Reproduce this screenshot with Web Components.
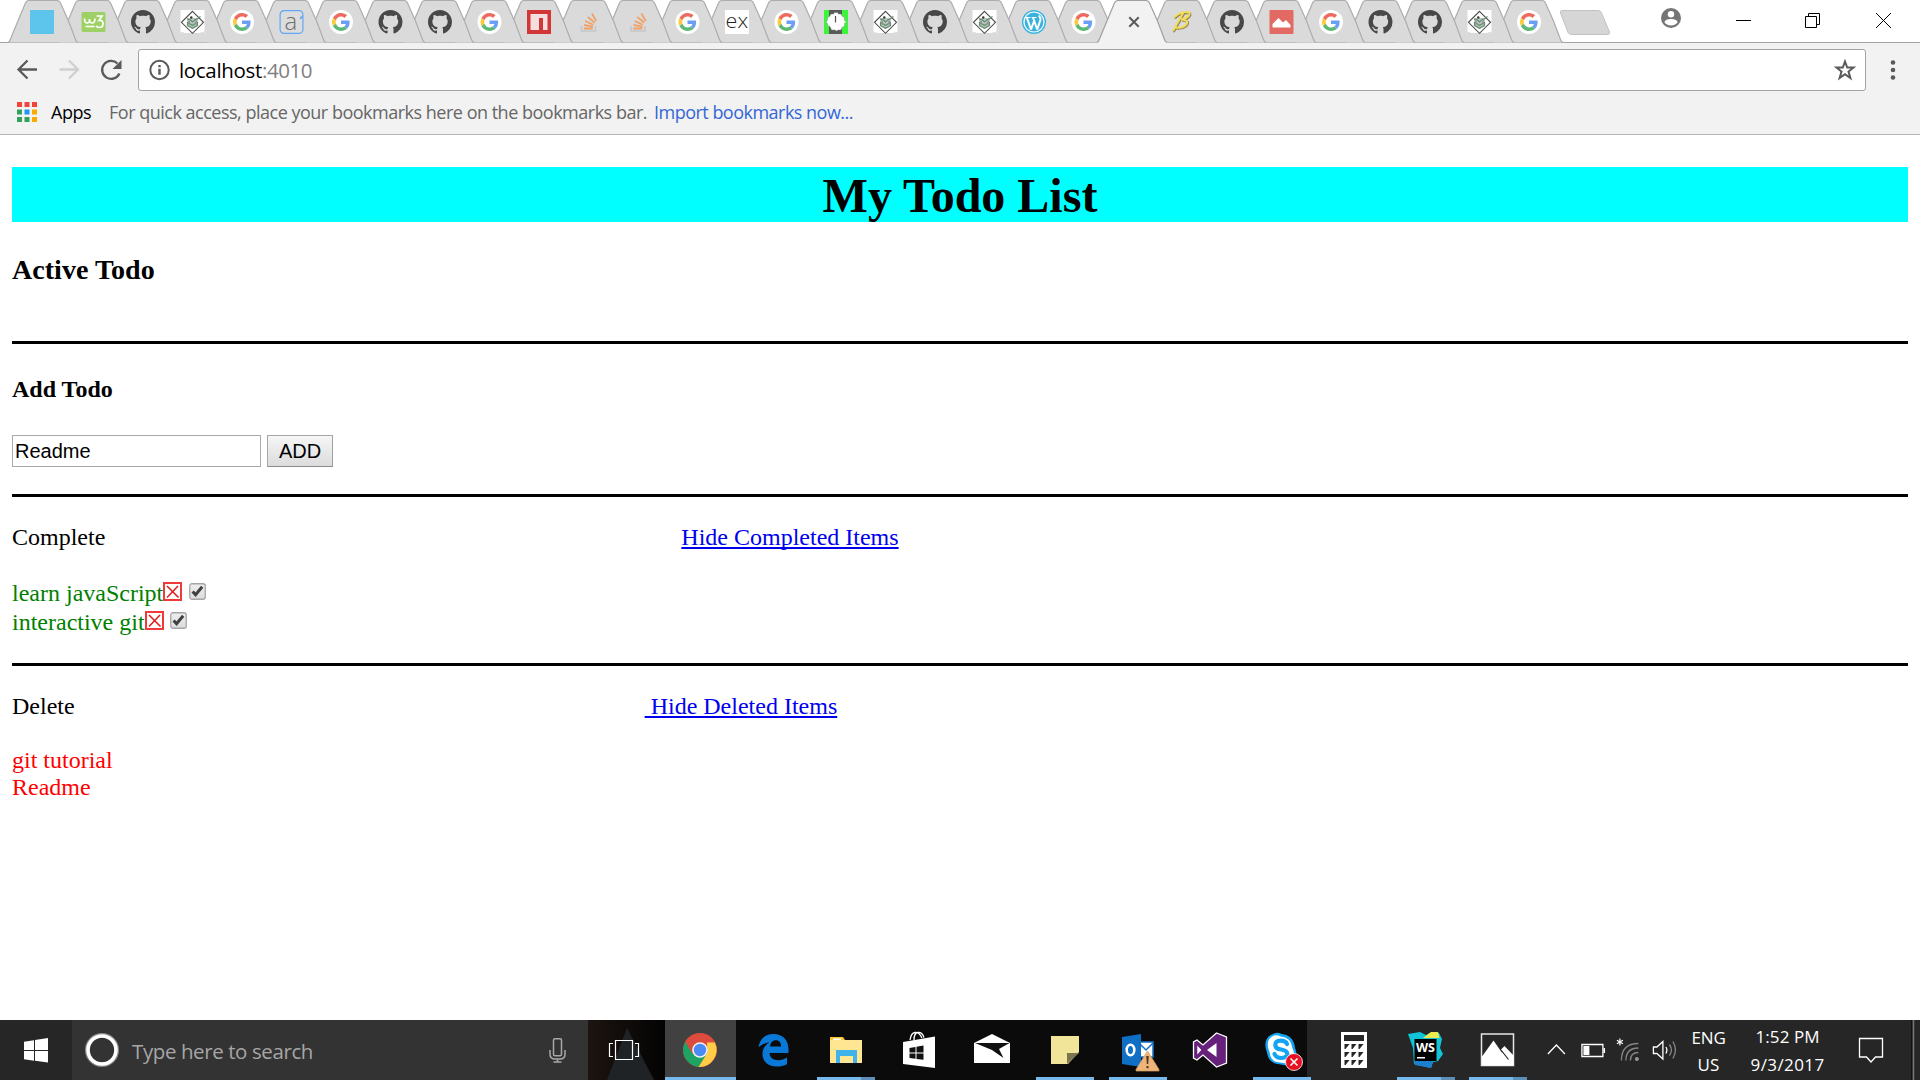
<!DOCTYPE html>
<html lang="en">
<head>
<meta charset="utf-8">
<title>localhost:4010</title>
<style>
html,body{margin:0;height:100%;overflow:hidden;background:#fff}
body{display:flex;flex-direction:column;height:1080px;width:1920px}
</style>
</head>
<body>
<browser-tabs></browser-tabs>
<browser-toolbar></browser-toolbar>
<bookmarks-bar></bookmarks-bar>
<todo-page></todo-page>
<task-bar></task-bar>

<script>
const define = (name, html, setup) => customElements.define(name, class extends HTMLElement {
  connectedCallback() {
    if (this.shadowRoot) return;
    const t = document.createElement('template');
    t.innerHTML = html;
    this.attachShadow({ mode: 'open' }).append(t.content.cloneNode(true));
    if (setup) setup(this, this.shadowRoot);
  }
});

/* One line of interface text set to a fixed advance width. */
define('ui-text', `<style>:host{display:block;white-space:pre;font-family:"Open Sans","Noto Sans",sans-serif}span{display:inline-block}</style><span><slot></slot></span>`, (el, root) => {
  const span = root.querySelector('span');
  const w = +el.getAttribute('width');
  const n = el.textContent.length;
  const d = (w - span.getBoundingClientRect().width) / n;
  el.style.letterSpacing = d.toFixed(3) + 'px';
  el.style.width = w + 'px';
});

const G = `<g transform="translate(3 3) scale(.375)"><path fill="#ee6a5f" d="M24 9.5c3.54 0 6.71 1.22 9.21 3.6l6.85-6.85C35.9 2.38 30.47 0 24 0 14.62 0 6.51 5.38 2.56 13.22l7.98 6.19C12.43 13.72 17.74 9.5 24 9.5z"/><path fill="#6a9ff5" d="M46.98 24.55c0-1.57-.15-3.09-.38-4.55H24v9.02h12.94c-.58 2.96-2.26 5.48-4.78 7.18l7.73 6c4.51-4.18 7.09-10.36 7.09-17.65z"/><path fill="#fcca3c" d="M10.53 28.59c-.48-1.45-.76-2.99-.76-4.59s.27-3.14.76-4.59l-7.98-6.19C.92 16.46 0 20.12 0 24c0 3.88.92 7.54 2.56 10.78l7.97-6.19z"/><path fill="#5cb874" d="M24 48c6.48 0 11.93-2.13 15.89-5.81l-7.73-6c-2.15 1.45-4.92 2.3-8.16 2.3-6.26 0-11.57-4.22-13.47-9.91l-7.98 6.19C6.51 42.62 14.62 48 24 48z"/></g>`;
const FAV = {
  blank: `<path fill="#5dc4ec" d="M0 0h24v24H0z"/>`,
  w3: `<rect y="2" width="24" height="20" rx="1.5" fill="#9fd066"/><path d="M3 8.500c0 4 1 4.500 3 4.500s2-2 2-4c0 3 .5 4 2.500 4s3-1.500 3-4.500M4 16.500h9" fill="none" stroke="#fff" stroke-width="1.600"/><path d="M15 6h5.500l-3 4.500c3-.5 4 1 4 3.200 0 2.500-1.500 3.800-3.800 3.800-1.500 0-2.500-.6-3-1.600" fill="none" stroke="#fff" stroke-width="1.700"/>`,
  gh: `<path transform="scale(1.5)" fill="#484848" d="M8 0C3.58 0 0 3.58 0 8c0 3.54 2.29 6.53 5.47 7.59.4.07.55-.17.55-.38 0-.19-.01-.82-.01-1.49-2.01.37-2.53-.49-2.69-.94-.09-.23-.48-.94-.82-1.13-.28-.15-.68-.52-.01-.53.63-.01 1.08.58 1.23.82.72 1.21 1.87.87 2.33.66.07-.52.28-.87.51-1.07-1.78-.2-3.64-.89-3.64-3.95 0-.87.31-1.59.82-2.15-.08-.2-.36-1.02.08-2.12 0 0 .67-.21 2.2.82.64-.18 1.32-.27 2-.27.68 0 1.36.09 2 .27 1.53-1.04 2.2-.82 2.2-.82.44 1.1.16 1.92.08 2.12.51.56.82 1.27.82 2.15 0 3.07-1.87 3.75-3.65 3.95.29.25.54.73.54 1.48 0 1.07-.01 1.93-.01 2.2 0 .21.15.46.55.38A8.013 8.013 0 0016 8c0-4.42-3.58-8-8-8z"/>`,
  leaf: `<path fill="#fff" d="M0 0h24v24H0z"/><path fill="#dadada" d="M0 21.500l4 1.500h15l5-1.500V24H0z"/><path fill="none" stroke="#4a4a4a" stroke-width="1.100" d="M12 1.300L23 12.300 12 23.300 1 12.300z"/><path fill="#bcc5be" d="M6.500 8h11v8L12 19l-5.500-3z"/><circle cx="10.800" cy="7.500" r="1.200" fill="#333"/><path fill="none" stroke="#5f8f6e" stroke-width="1.200" d="M6.500 9c2 0 4 1 5.500 3 1.500-2 3-3 5.500-3.500l2.500-2M7 12v3.500l5 2.800 5-2.800V12M9 13.500l3 2 3-2"/><path stroke="#666" stroke-width=".8" fill="none" d="M8.500 10.500v4M15.500 10.500v4"/>`,
  g: `<circle cx="12" cy="12" r="12" fill="#fff"/>` + G,
  a: `<rect x=".6" y=".6" width="22.800" height="22.800" rx="4" fill="#dcdcdc" stroke="#62a6f5" stroke-width="1.200"/><path d="M21 9q0-2 2.500-2.500" stroke="#62a6f5" fill="none" stroke-width="1.500"/><text x="5" y="19.500" font-family="Open Sans" font-weight="300" font-size="24" fill="#707070">a</text>`,
  npm: `<path fill="#d23636" d="M0 0h24v24H0z"/><path fill="#f4dede" d="M3.500 4h17v16H16V8h-4v12H3.500z"/>`,
  so: `<path fill="none" stroke="#c3c7cb" stroke-width="1.700" d="M5 16v5h14v-5"/><path stroke="#f0a269" stroke-width="1.800" d="M8 18.500h9M8.300 15l8.800 1.600M9.300 11l8.200 3.800M12 7l7 5.700M16 3.500l4.500 7.500" transform="translate(-.7 0)"/>`,
  ex: `<path fill="#fff" d="M0 0h24v24H0z"/><text x=".6" y="17.500" font-family="Open Sans" font-weight="300" font-size="20" textLength="22.500" lengthAdjust="spacingAndGlyphs" fill="#222">ex</text>`,
  clock: `<path fill="#3bf53b" d="M0 0h24v24H0z"/><path fill="#5a5a5a" d="M5 0h13v24H5z"/><path fill="#fff" stroke="#777" stroke-width=".4" d="M7 4h2.500l1-1.500h3l1 1.500H17l1.500 2.500 2 1v3l2 1.500-2 1.500v2.500l-2.500 1.500-1 2.500h-3l-1.500 1-1.500-1H7.500L6 16.500l-2.500-1v-2L2 12l1.500-2V7.500l2-1z"/><path stroke="#555" stroke-width="1.200" d="M11.500 6v6.500"/>`,
  wp: `<circle cx="12" cy="12" r="11.300" fill="#fff" stroke="#38b3df" stroke-width="1.400"/><circle cx="12" cy="12" r="9.400" fill="#38b3df"/><path fill="none" stroke="#fff" stroke-width="2" d="M4.800 7.500l4.200 12M11 7.500l4.200 12M9 19.500l3.200-9M15.200 19.500l3.200-9.500q.4-2-1.500-4.500"/><path stroke="#fff" stroke-width="1" d="M3.300 7.500h5M9.500 7.500h5"/>`,
  b: `<g fill="none" stroke-linecap="round" transform="rotate(4 12 12)"><path stroke="#8f8650" stroke-width="2.400" d="M12.800 3.800L4.200 21.800M4.800 8.300c3-4 9-6.300 13.500-5.500 2.500 1 0 6-7 7.500 5 0 7.500 1.500 5.500 4.500-2 3-6 4-10 4.200"/><path stroke="#f2dc5a" stroke-width="2" d="M12 3L3.500 21M4 7.500c3-4 9-6.300 13.500-5.500 2.500 1 0 6-7 7.500 5 0 7.500 1.500 5.500 4.500-2 3-6 4-10 4.200"/></g>`,
  hill: `<rect width="24" height="24" rx="1" fill="#e26a62"/><path fill="#fff" d="M3 17.500v-3.500L9 8l4.500 4.500L16.500 10l4.500 5v2.500z"/>`,
  close: `<path stroke="#5a5a5a" stroke-width="2" d="M8.300 7.300l9.400 9.400M17.700 7.300l-9.400 9.400"/>`
};
const TABS = 'blank w3 gh leaf g a g gh gh g npm so so g ex g clock leaf gh leaf wp g close b gh hill g gh gh leaf g'.split(' ');

define('browser-tab', `<style>
:host{display:block;flex:0 0 49.5px;height:43px;position:relative}
svg{display:block;overflow:visible}
.edge{stroke:#adadad;stroke-width:1.2;fill:#dadada}
:host([active]) .edge{fill:#f2f2f2;stroke:#a0a0a0}
</style><svg width="49.5" height="43"></svg>`, (el, root) => {
  const n = el.getAttribute('icon');
  const i = +el.getAttribute('index');
  const left = 8 + 49.5 * i;
  const dx = i ? Math.round(left + 23.5) - left : 22;
  root.querySelector('svg').innerHTML = `<path class="edge" d="M0 42.500Q1.500 42 2.300 39.500L9.500 22 17.500 3Q18.600 .5 21 .5H49Q51.400 .5 52.500 3L60.500 21 67.500 39.500Q68.300 42 70 42.500"/>` +
   (el.hasAttribute('active') ? `<path d="M1 43h68" stroke="#f2f2f2" stroke-width="1.800"/>` : '') +
   `<g transform="translate(${dx} 10)">${FAV[n]}</g>`;
});

define('browser-tabs', `<style>
:host{display:flex;height:43px;flex:none;background:linear-gradient(#fff 42px,#a3a3a3 42px);justify-content:space-between}
.strip{display:flex;padding-left:8px;isolation:isolate}
.new{margin:10px 0 0 17.500px}
svg{display:block}
</style><div class="strip"></div>
<svg width="280" height="42" viewBox="1640 0 280 42"><circle cx="1671" cy="18" r="10" fill="#757575"/><circle cx="1671" cy="14.300" r="3.200" fill="#fff"/><path d="M1664.500 22.500q0-3.500 6.500-3.500t6.500 3.500q-2.500 3-6.500 3t-6.500-3z" fill="#fff"/><g fill="none" stroke="#000" stroke-width="1"><path d="M1736 20.500h15M1876 13l15 15M1891 13l-15 15"/><path d="M1805.500 16.500h11v11h-11zM1808.500 16v-2.500h11v11h-2.500"/></g></svg>`, (el, root) => {
  const strip = root.querySelector('.strip');
  TABS.forEach((n, i) => {
    const t = document.createElement('browser-tab');
    t.setAttribute('icon', n);
    t.setAttribute('index', i);
    if (n === 'close') t.setAttribute('active', '');
    t.style.zIndex = n === 'close' ? 99 : 50 - i;
    strip.append(t);
  });
  strip.insertAdjacentHTML('beforeend', `<svg class="new" width="52" height="26" style="margin-left:${1560 - 8 - 49.5 * TABS.length}px"><path fill="#d6d6d6" stroke="#c2c2c2" d="M1.500 .5H38q2.500 0 3.300 2L49.500 22q.6 2-1.500 2.500H11.500Q9 24.500 8 22.500L.5 3Q0 .5 1.500 .5z"/></svg>`);
});

define('browser-toolbar', `<style>
:host{display:flex;flex:none;height:55px;background:#f2f2f2;align-items:flex-start}
.nav{display:block;width:138px;height:55px}
.box{display:flex;align-items:center;box-sizing:border-box;margin-top:6px;width:1728px;height:42px;border:1px solid #a3a3a3;border-radius:3px;background:#fff;padding:0 9px 0 10px}
ui-text{font-size:20.500px;line-height:40px;height:40px;margin-left:9px}
.port{margin-left:0;color:#808080}
.star{margin-left:auto}
svg{display:block}
</style>
<svg class="nav" viewBox="0 43 138 55"><g fill="none" stroke-width="2.300"><path stroke="#5a5a5a" d="M37 69.500H19M27.500 60.500l-9 9 9 9"/><path stroke="#d0d0d0" d="M59.500 69.500H78M69 60.500l9 9-9 9"/><path stroke="#5a5a5a" d="M117.500 63.500A9 9 0 1 0 119.400 73.500"/></g><path fill="#5a5a5a" d="M121.500 60v9h-9z"/></svg>
<div class="box"><svg width="21" height="22"><circle cx="10.500" cy="11" r="9.200" fill="none" stroke="#5a5a5a" stroke-width="2"/><path fill="#5a5a5a" d="M9.300 6h2.400v2.200H9.300zM9.300 9.800h2.400v6H9.300z"/></svg>
<ui-text width="83">localhost</ui-text><ui-text class="port" width="50">:4010</ui-text>
<svg class="star" width="22" height="22"><path fill="none" stroke="#5a5a5a" stroke-width="2" d="M11 2.500l2.200 6h6.300l-5 4 1.900 6.500L11 15.200 5.600 19l1.900-6.500-5-4h6.300z"/></svg></div>
<svg width="54" height="55"><g fill="#5a5a5a"><circle cx="27" cy="19.500" r="2.300"/><circle cx="27" cy="27" r="2.300"/><circle cx="27" cy="34.500" r="2.300"/></g></svg>`);

define('bookmarks-bar', `<style>
:host{display:flex;flex:none;height:37px;background:#f2f2f2;border-bottom:1px solid #b6b6b6;box-sizing:border-box;padding:0 0 0 17px;font-size:18px;line-height:29px}
svg{display:block;margin:4px 14px 0 0}
.hint{color:#666;margin-left:18px}.link{color:#3367d6;margin-left:7px}
</style><svg width="20" height="20"><path fill="#f44336" d="M0 0h5v5H0zM7.500 0h5v5h-5zM15 0h5v5h-5z"/><path fill="#34a05a" d="M0 7.500h5v5H0zM0 15h5v5H0zM7.500 15h5v5h-5z"/><path fill="#2196f3" d="M7.500 7.500h5v5h-5z"/><path fill="#f9ab00" d="M15 7.500h5v5h-5zM15 15h5v5h-5z"/></svg>
<ui-text width="40">Apps</ui-text><ui-text class="hint" width="538">For quick access, place your bookmarks here on the bookmarks bar.</ui-text><ui-text class="link" width="199">Import bookmarks now...</ui-text>`);

define('page-rule', `<style>:host{display:block;height:3px;background:#000}</style>`);

define('todo-item', `<style>
:host{display:flex;height:29px;line-height:29px;color:green}
:host([deleted]){color:red;height:27px;line-height:27px}
:host([deleted]) svg{display:none}
.del{margin-top:2.500px}.chk{margin:4px 0 0 6.500px}
</style><span><slot></slot></span><svg class="del" width="19" height="19"><path fill="#fff" stroke="#f03a3a" stroke-width="2" d="M1 1h17v17H1z"/><path stroke="#e02020" stroke-width="1.600" d="M4 4l11.500 11.500M15 4L4 15.500"/></svg>
<svg class="chk" width="17" height="18"><defs><linearGradient id="c" x2="0" y2="1"><stop stop-color="#eee"/><stop offset="1" stop-color="#dcdcdc"/></linearGradient></defs><rect x=".75" y=".75" width="15.500" height="15.500" rx="2.200" fill="url(#c)" stroke="#a6a6a6" stroke-width="1.300"/><path fill="none" stroke="#404040" stroke-width="3" d="M3.600 8.400l3 3.300 6.600-8"/></svg>`);

define('toggle-link', `<style>:host{display:block}a{color:#00e;text-decoration:underline;text-decoration-thickness:2px;text-underline-offset:2px;white-space:pre;text-decoration-skip-ink:none}</style><a><slot></slot></a>`);

define('add-form', `<style>
:host{display:flex;gap:6px;height:32px}
input,button{box-sizing:border-box;margin:0;height:32px;font:20px "Liberation Sans",Arial,sans-serif;color:#000;border-radius:0}
input{width:249px;border:1px solid #a9a9a9;padding:0 0 0 2px;background:#fff}
button{width:66px;border:1px solid #a6a6a6;border-color:#a6a6a6 #a0a0a0 #8c8c8c #a6a6a6;background:linear-gradient(#f6f6f6,#dcdcdc);padding:0}
</style><input value="Readme"><button>ADD</button>`);

define('todo-page', `<style>
:host{display:block;flex:1;background:#fff;padding:32px 12px 0;box-sizing:border-box;font:24px/27px "Liberation Serif","Times New Roman",serif;color:#000}
h1,h3,h4{margin:0;font-weight:bold}
h1{font-size:48px;line-height:53px;padding-top:2px;background:#0ff;text-align:center}
h3{font-size:28.080px;line-height:32px;margin:32px 0 55px}
h4{font-size:24px;margin:32px 0}
.row{display:flex;margin:27px 0}
.row toggle-link{margin-left:var(--gap)}
</style>
<h1>My Todo List</h1>
<h3>Active Todo</h3>
<page-rule></page-rule>
<h4>Add Todo</h4>
<add-form></add-form>
<page-rule style="margin-top:27px"></page-rule>
<div class="row" style="--gap:576px"><span>Complete</span><toggle-link>Hide Completed Items</toggle-link></div>
<todo-item style="margin-top:28px">learn javaScript</todo-item>
<todo-item>interactive git</todo-item>
<page-rule style="margin-top:26px"></page-rule>
<div class="row" style="--gap:570px"><span>Delete</span><toggle-link> Hide Deleted Items</toggle-link></div>
<todo-item deleted>git tutorial</todo-item>
<todo-item deleted>Readme</todo-item>`);

const APPS = {
  chrome: `<circle cx="35" cy="30" r="17" fill="#dd4b3e"/><path fill="#1da362" d="M20.300 21.500A17 17 0 0 0 33.500 46.900L42 34 35 30 27.500 34z"/><path fill="#ffcd46" d="M49.700 22.300A17 17 0 0 1 33.500 46.900L42.300 33 42 22.300z"/><path fill="#dd4b3e" d="M20.300 21.500L28 34l7-11.700h14.700A17 17 0 0 0 20.300 21.500z"/><circle cx="35" cy="30" r="7.800" fill="#f1f1f1"/><circle cx="35" cy="30" r="6.200" fill="#4a8af4"/>`,
  edge: `<path fill="#0a78d7" d="M20.500 27.500C21.500 19 27 14 35.500 14 45 14 50.500 20.500 50.500 29v4H31.500c.3 5 4 7.200 8.500 7.200 3.500 0 6.500-1 9-2.600v6.600C46 45.700 42.500 46.500 38.500 46.500 30 46.500 24.500 41.500 24.500 34c0-5 2.300-8.800 7-11.500-5 .5-8.500 2.500-11 5zM32 26.500h11c0-4-1.700-6.200-5-6.200-3.500 0-5.500 2.500-6 6.200z"/>`,
  files: `<path fill="#fdc633" d="M20 17h13l2 3v4H20z"/><path fill="#ffe693" d="M20 20h32v23H20z"/><path fill="#fff" d="M23 18.500h8v1.500h-8z"/><path fill="#3fb3ea" d="M26 30h21v13h-4v-7H30v7h-4z"/>`,
  store: `<path fill="none" stroke="#fff" stroke-width="1.300" d="M27 20q1-7 5-7.500t7 5.500M31 20q0-7 4-7.500t6 5"/><path fill="#fff" d="M20 22l32-5.500v31.500L20 44z"/><path fill="#111" d="M26.500 28l6-1v5.500h-6zM33.500 26.800l7-1.200v6.900h-7zM26.500 33.500h6v5.300l-6-.7zM33.500 33.500h7v6.200l-7-.8z"/>`,
  mail: `<path fill="#fff" d="M19 23L37 14l18 9v20H19z"/><path fill="#111" d="M20 23h34.500L44 29l4.500 9L37 30z"/>`,
  note: `<path fill="#f0e599" d="M23 16h28v16L40 44H23z"/><path fill="#7c7650" d="M39 33h12L39 44z"/>`,
  outlook: `<path fill="#fff" stroke="#1673c8" stroke-width="1.500" d="M38 22h15v15H38z"/><path fill="none" stroke="#1673c8" stroke-width="1.500" d="M40 24l6 6 7-7"/><path fill="#0f6fc5" d="M22 17l19-3v33l-19-3z"/><ellipse cx="30.500" cy="30" rx="3.800" ry="5.200" fill="none" stroke="#fff" stroke-width="2.600"/><path fill="#eeb47a" stroke="#d99b5c" stroke-width=".7" d="M47.500 31L59 49.500V51H36v-1.500z"/><path fill="#4a3520" d="M46.300 36h2.400l-.5 8h-1.400zM46.500 46h2v2.300h-2z"/>`,
  vs: `<path fill="#68217a" stroke="#fff" stroke-width="1.300" d="M43.500 13L53.500 17v26l-10 4L30 35l-6 5-3.500-2V22l3.500-2 6 5z"/><path fill="#fff" d="M43.500 23v14L34 30zM24.300 25.500v9l4-4.500z"/>`,
  skype: `<path fill="#12a5f4" d="M29 13.500q4-1.500 7.500.5 12 1 13.500 14 3.500 8-1 13.500t-13 3Q23.500 44 22 32.500 16.500 18 29 13.500z"/><path fill="#fff" d="M29 15.500q4-1 6.500 1 10.500.5 12 12 3.500 6.500-.5 11.500t-11.500 2.500Q25.500 42.500 24.500 32 19.500 19.500 29 15.500z"/><path fill="none" stroke="#12a5f4" stroke-width="4.200" stroke-linecap="round" d="M42 24q-1.500-3.500-6.500-3.300-5.500.3-5.200 4.300t6 4.500q6 1 6 4.500t-6 4q-5 0-6.800-4"/><circle cx="49" cy="42" r="8.500" fill="#e81123" stroke="#fff" stroke-width=".8"/><path stroke="#fff" stroke-width="1.600" d="M45.500 38.500l7 7M52.500 38.500l-7 7"/>`,
  calc: `<path fill="#fff" d="M23 12h26v36H23z"/><path fill="#262626" d="M26 15h20v6H26z"/><path fill="#262626" d="M26.500 24h5l-4 5h-1zM33.500 24h5l-4 5h-1zM40.500 24h5l-4 5h-1zM26.500 32h5l-4 5h-1zM33.500 32h5l-4 5h-1zM40.500 32h5l-4 5h-1zM26.500 40h5l-4 5h-1zM33.500 40h5l-4 5h-1zM40.500 40h5l-4 5h-1z"/>`,
  ws: `<path fill="#12c4d8" d="M18 14l12-2 6 3 6-3 7 1 3 6-2 9 3 6-5 7-5 1-2 6-17-4-1-16z"/><path fill="#eeea4d" d="M33 18l8-6h7l1.500 6z"/><path fill="#1d7fd0" d="M23 39l2 6 16 3 2-7H23z"/><path fill="#000" d="M24.500 19h22v22h-22z"/><text x="26" y="31.500" font-family="Open Sans" font-weight="700" font-size="12.500" textLength="19" lengthAdjust="spacingAndGlyphs" fill="#fff">WS</text><path fill="#fff" d="M27 37h8v1.500h-8z"/>`,
  photos: `<path fill="#262626" stroke="#e6e6e6" stroke-width="1.500" d="M18.500 14h32v31.500h-32z"/><path fill="#fff" d="M19 36.500L30.500 20.500l9 13-1.500-4 3.500-3.500 9 9.500v10H19z"/><path fill="none" stroke="#262626" stroke-width="1.200" d="M38 30l7.500 9.500"/>`
};
define('task-app', `<style>
:host{display:flex;flex-direction:column;flex:0 0 72.55px;height:60px}
:host([active]) {background:linear-gradient(90deg,#414141 71px,transparent 71px)}
:host([plain]){background:#262626}
svg{display:block;flex:none;height:57px;overflow:visible}
i{display:block;height:3px;width:58px;margin-left:var(--u,6.500px)}
:host([open]) i,:host([multi]) i{background:#76b9ed}
:host([multi]) i{background:linear-gradient(90deg,#76b9ed 44px,#5e8fb9 44px)}
:host([active]) i{width:71px;margin:0}
</style><svg width="72" height="57"></svg><i></i>`, (el, root) => { root.querySelector('svg').innerHTML = APPS[el.getAttribute('app')]; });

define('task-bar', `<style>
:host{display:flex;flex:none;height:60px;background:#0c0b0b;color:#fff}
svg{display:block;flex:none}
.search{display:flex;flex:0 0 516px;background:#333}
.search ui-text{font-size:20.500px;line-height:60px;height:60px;margin-left:12px;color:#a6a6a6;padding-top:1px;box-sizing:border-box}
.tray{display:flex;flex:1;background:#262626}
.col{display:flex;flex-direction:column;align-items:center;padding-top:4px}
.col ui-text{font-size:17px;line-height:27px}
</style>
<svg width="72" height="60" style="background:#262626"><path fill="#fff" d="M24 31h10v9.700l-10-1.400zM35 31h13v11.500l-13-1.800zM24 30h10v-9.700L24 21.700zM35 30h13V18l-13 2z"/></svg>
<div class="search"><svg width="48" height="60"><circle cx="30" cy="30" r="14.800" fill="none" stroke="#8a8a8a" stroke-width="4.500"/><circle cx="30" cy="30" r="14" fill="none" stroke="#fff" stroke-width="3.600"/></svg>
<ui-text width="181">Type here to search</ui-text>
<svg style="margin-left:auto" width="47" height="60"><path fill="none" stroke="#a8a8a8" stroke-width="1.500" d="M14 18.700h5q1.500 0 1.500 1.500v14q0 1.500-1.500 1.500h-5q-1.500 0-1.500-1.500v-14q0-1.500 1.500-1.500zM9 30v4q0 5 5 5h5q5 0 5-5v-4M16.500 39v3M12.500 42h8"/></svg></div>
<svg width="77" height="60"><defs><linearGradient id="k"><stop stop-color="#1c1410"/><stop offset="1" stop-color="#030303"/></linearGradient></defs><path fill="url(#k)" d="M0 0h77v60H0z"/><path fill="#202326" d="M39 8L66 60H19z"/><g fill="none" stroke="#fff" stroke-width="1.200"><path d="M27.500 20.500h17v19h-17zM25 23.500h-3.500v13H25M47 23.500h3.500v13H47"/></g></svg>
<task-app app="chrome" active open></task-app><task-app app="edge"></task-app><task-app app="files" multi></task-app><task-app app="store"></task-app><task-app app="mail"></task-app><task-app app="note" open style="--u:8.500px"></task-app><task-app app="outlook" open style="--u:8.700px"></task-app><task-app app="vs"></task-app><task-app app="skype" open style="--u:7.600px;background:linear-gradient(90deg,#0c0b0b 62px,#262626 62px)"></task-app><task-app app="calc" plain></task-app><task-app app="ws" plain multi></task-app><task-app app="photos" plain multi style="--u:6px"></task-app>
<div class="tray">
<svg width="156" height="60" viewBox="1535.600 0 156 60"><g fill="none" stroke="#fff" stroke-width="1.300"><path d="M1547.500 34l8.500-9 8.500 9"/><path d="M1581.500 24.500h21v12h-21zM1604 28v5"/><path d="M1653 27h3.500l6-5.500v17.500l-6-5.500H1653z"/><path d="M1665.500 27q2 3 0 6.500"/><path stroke="#888" d="M1669 24.500q4 5.500 0 11M1672.500 21.500q5 8.500 0 17"/><path stroke="#858585" d="M1621 40.500q0-17 17-17M1625.500 40.500q0-12.500 12.500-12.500M1630 40.500q0-8 8-8"/></g><circle cx="1636.500" cy="39" r="2" fill="#999"/><path stroke="#fff" stroke-width="1.200" d="M1619.500 18.500v7M1616.500 20.200l6 3.500M1622.500 20.200l-6 3.500"/><path fill="#fff" d="M1583 26h6v9h-6z"/></svg>
<div class="col"><ui-text width="34">ENG</ui-text><ui-text width="22">US</ui-text></div>
<div class="col" style="margin-left:25px;padding-top:3px"><ui-text width="64">1:52 PM</ui-text><ui-text width="74" style="padding-top:1px">9/3/2017</ui-text></div>
<svg style="margin-left:auto" width="96" height="60" viewBox="1824 0 96 60"><path fill="none" stroke="#fff" stroke-width="1.300" d="M1858.500 18.500h23v18.500h-7l-4.500 5-4.500-5h-7z"/><path stroke="#111" d="M1910.500 0v60"/><path stroke="#777" stroke-width="1.500" d="M1912.500 0v60"/></svg>
</div>`);
</script>
</body>
</html>
